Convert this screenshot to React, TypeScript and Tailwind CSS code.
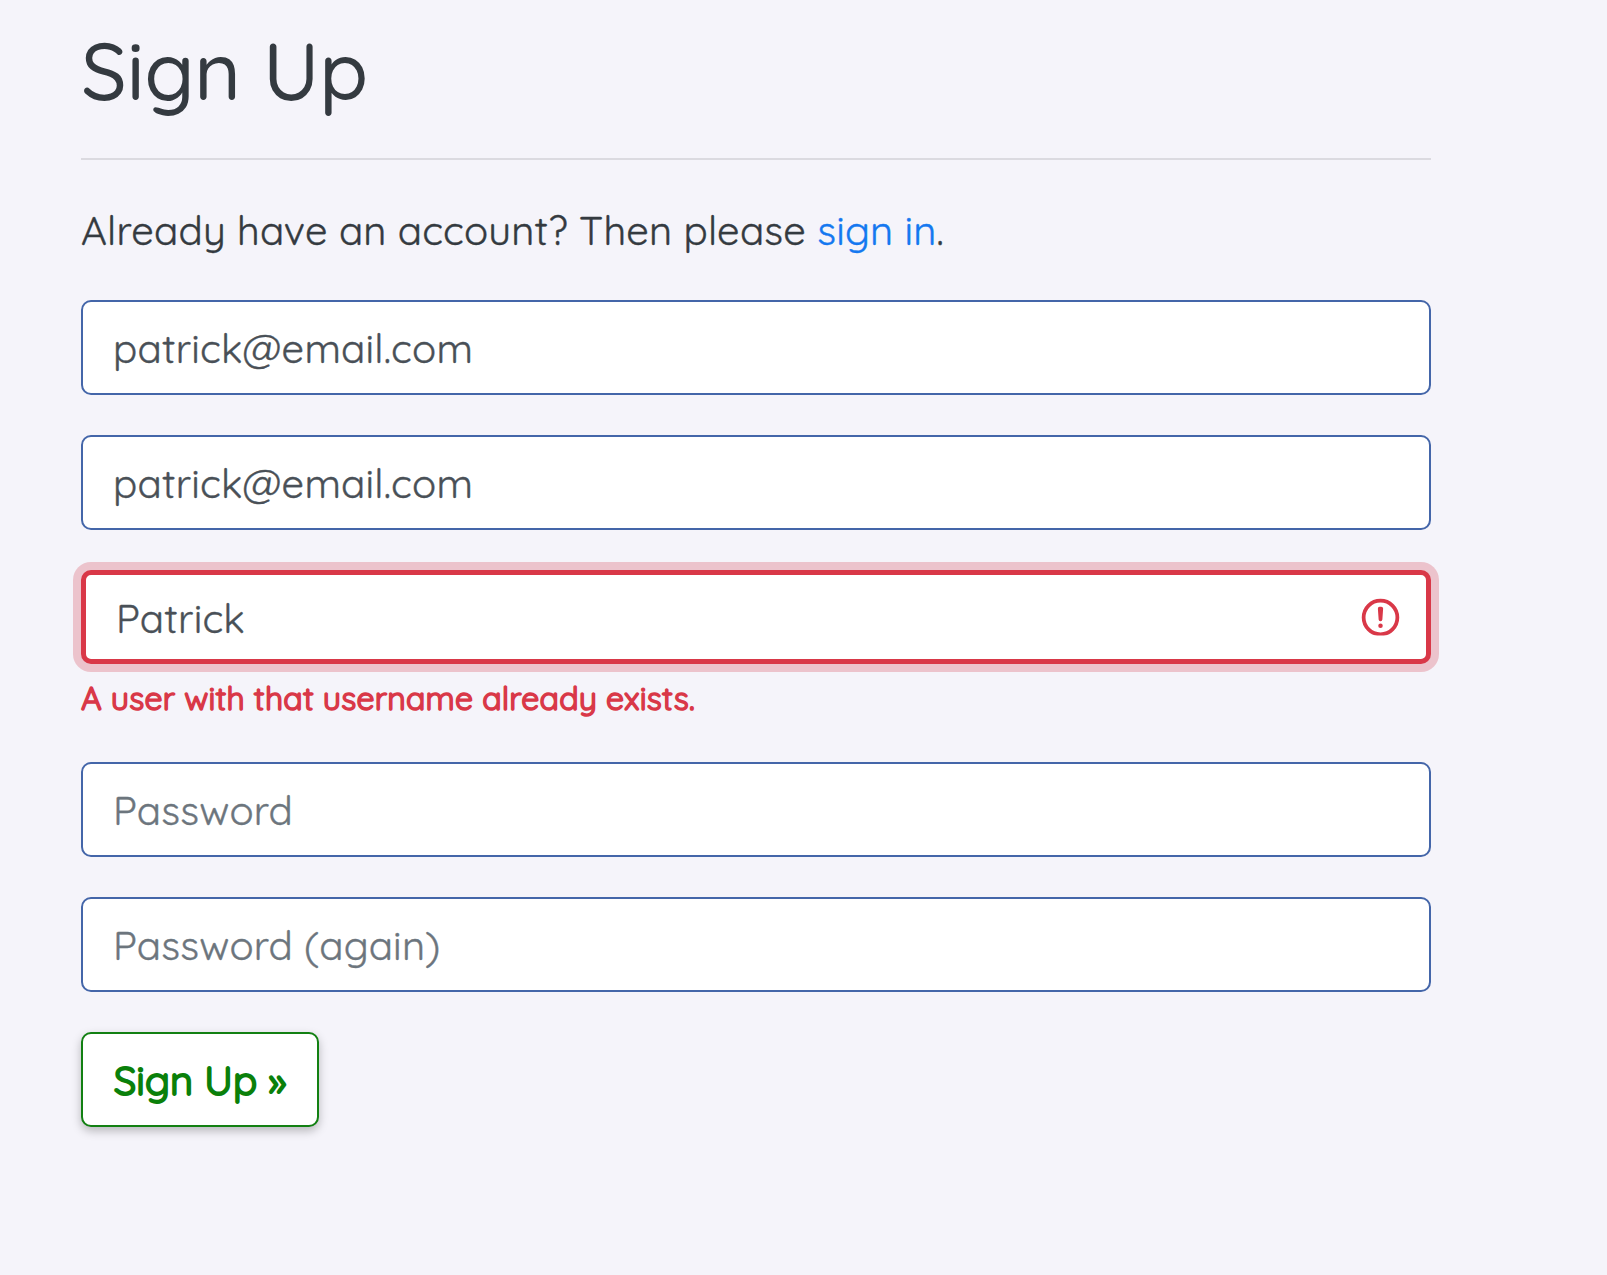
import type { InputHTMLAttributes } from 'react';

const fieldBase =
  'block w-full rounded-[10px] bg-white text-[40px] tracking-[0.2px] text-[#495057] placeholder:text-[#6c757d] placeholder:opacity-100 outline-none pt-px [-webkit-text-stroke:0.4px_currentColor]';

function Field({ className, ...props }: InputHTMLAttributes<HTMLInputElement>) {
  return <input {...props} className={`${fieldBase} h-[95px] border-2 border-[#4466a9] px-[30px] ${className ?? ''}`} />;
}

function AlertIcon() {
  return (
    <svg
      viewBox="0 0 12 12"
      className="pointer-events-none absolute top-[25px] right-[28px] h-[45px] w-[45px] [clip-path:inset(0_0_4.5px_0)]"
      fill="none"
      stroke="#d93848"
      aria-hidden="true"
    >
      <circle cx="6" cy="6" r="4.5" />
      <path strokeLinejoin="round" d="M5.8 3.6h.4L6 6.5z" />
      <circle cx="6" cy="8.2" r=".6" fill="#d93848" stroke="none" />
    </svg>
  );
}

export default function App() {
  return (
    <main className="min-h-screen bg-[#f5f4fa] pl-[81px] pr-[176px] font-['Quicksand','Lato',sans-serif] text-[#343a40]">
      <h1 className="h-[158px] pt-[22px] text-[80px] leading-[96px] font-medium tracking-[-0.2px]">Sign Up</h1>
      <hr className="border-0 h-[2px] bg-[#dbdae0]" />
      <p className="mt-[40px] h-[60px] whitespace-nowrap text-[40px] leading-[60px] tracking-[0.19px] [-webkit-text-stroke:0.4px_currentColor]">
        Already have an account? Then please{' '}
        <a href="#" className="text-[#1478f0] [-webkit-text-stroke:0.4px_#1478f0]">sign in</a>.
      </p>
      <form className="mt-[40px] flex flex-col gap-[40px]" onSubmit={(e) => e.preventDefault()}>
        <Field type="text" aria-label="Email" defaultValue="patrick@email.com" />
        <Field type="text" aria-label="Email (again)" defaultValue="patrick@email.com" />
        <div className="h-[152px]">
          <div className="relative">
            <input
              type="text"
              aria-label="Username"
              defaultValue="Patrick"
              className={`${fieldBase} h-[94px] border-5 border-[#d93848] px-[30px] shadow-[0_0_0_8px_#ecc3cc]`}
            />
            <AlertIcon />
          </div>
          <p className="mt-[10px] text-[32px] leading-[48px] tracking-[0.2px] text-[#d93848] [-webkit-text-stroke:1.6px_#d93848]">
            A user with that username already exists.
          </p>
        </div>
        <Field type="password" placeholder="Password" />
        <Field type="password" placeholder="Password (again)" />
        <button
          type="submit"
          className="h-[95px] w-[238px] whitespace-nowrap rounded-[10px] border-2 border-[#128012] bg-white pt-px text-[40px] tracking-[0.1px] text-[#0a800a] shadow-[0_4px_10px_rgba(0,0,0,0.25)] [-webkit-text-stroke:2px_#0a800a]"
        >
          Sign Up »
        </button>
      </form>
    </main>
  );
}
